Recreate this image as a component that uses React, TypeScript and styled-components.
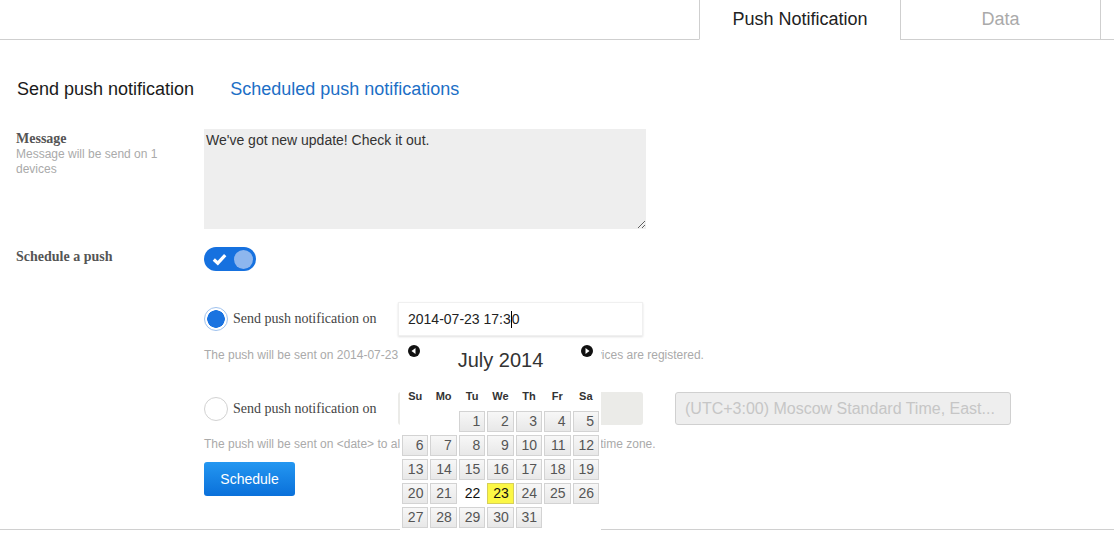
import React from "react";
import styled, { createGlobalStyle } from "styled-components";

const GlobalStyle = createGlobalStyle`
  body {
    margin: 0;
    background: #fff;
    font-family: "Liberation Sans", Arial, sans-serif;
  }
`;

const days: (number | null)[] = [
  null, null, 1, 2, 3, 4, 5,
  6, 7, 8, 9, 10, 11, 12,
  13, 14, 15, 16, 17, 18, 19,
  20, 21, 22, 23, 24, 25, 26,
  27, 28, 29, 30, 31,
];

const weekDays = ["Su", "Mo", "Tu", "We", "Th", "Fr", "Sa"];

const App: React.FC = () => {
  return (
    <Page>
      <GlobalStyle />

      {/* Top tabs */}
      <TabStrip>
        <TabFiller />
        <Tab active>Push Notification</Tab>
        <Tab>Data</Tab>
        <TabFiller small />
      </TabStrip>

      {/* Sub navigation */}
      <SubNav>
        <SubLink>Send push notification</SubLink>
        <SubLink active>Scheduled push notifications</SubLink>
      </SubNav>

      <FormRow>
        <LabelCol>
          <Label>Message</Label>
          <LabelHint>Message will be send on 1 devices</LabelHint>
        </LabelCol>
        <MessageBox readOnly defaultValue="We've got new update! Check it out." />
      </FormRow>

      <FormRow top={18}>
        <LabelCol>
          <Label>Schedule a push</Label>
        </LabelCol>
        <Toggle>
          <svg width="15" height="13" viewBox="0 0 15 13">
            <polyline
              points="1.8,6.5 5.8,10.2 13.2,2.2"
              fill="none"
              stroke="#fff"
              strokeWidth="3.2"
            />
          </svg>
          <Knob />
        </Toggle>
      </FormRow>

      <FormRow top={31}>
        <div />
        <OptionBlock>
          <OptionLine>
            <RadioWrap>
              <Radio checked />
              <RadioLabel>Send push notification on</RadioLabel>
            </RadioWrap>
            <DateField>
              <DateBox>
                2014-07-23 17:3<Caret />0
              </DateBox>
              <Calendar>
                <CalHeader>
                  <ArrowBtn>
                    <svg width="12" height="12" viewBox="0 0 12 12">
                      <circle cx="6" cy="6" r="6" fill="#111" />
                      <polygon points="7.5,3 3.5,6 7.5,9" fill="#fff" />
                    </svg>
                  </ArrowBtn>
                  <CalTitle>July 2014</CalTitle>
                  <ArrowBtn>
                    <svg width="12" height="12" viewBox="0 0 12 12">
                      <circle cx="6" cy="6" r="6" fill="#111" />
                      <polygon points="4.5,3 8.5,6 4.5,9" fill="#fff" />
                    </svg>
                  </ArrowBtn>
                </CalHeader>
                <CalGrid>
                  {weekDays.map((d) => (
                    <WeekDay key={d}>{d}</WeekDay>
                  ))}
                </CalGrid>
                <CalGrid days>
                  {days.map((d, i) =>
                    d === null ? (
                      <span key={i} />
                    ) : (
                      <DayCell
                        key={i}
                        variant={d === 23 ? "selected" : d === 22 ? "today" : "normal"}
                      >
                        {d}
                      </DayCell>
                    )
                  )}
                </CalGrid>
              </Calendar>
            </DateField>
          </OptionLine>
          <Hint top={12}>
            The push will be sent on 2014-07-23 17:30 to all your users' devices, 1 devices are registered.
          </Hint>

          <OptionLine top={29}>
            <RadioWrap>
              <Radio />
              <RadioLabel>Send push notification on</RadioLabel>
            </RadioWrap>
            <DisabledBox />
            <ZoneSelect>(UTC+3:00) Moscow Standard Time, East...</ZoneSelect>
          </OptionLine>
          <Hint top={12}>
            The push will be sent on &lt;date&gt; to all devices situated within the specified time zone.
          </Hint>

          <ScheduleButton>Schedule</ScheduleButton>
        </OptionBlock>
      </FormRow>
    </Page>
  );
};

/* ================== STYLED COMPONENTS ================== */

const Page = styled.div`
  width: 1114px;
  padding-bottom: 33px;
  border-bottom: 1px solid #d0d0d0;
`;

const TabStrip = styled.div`
  display: flex;
  height: 40px;
`;

const TabFiller = styled.div<{ small?: boolean }>`
  flex: ${({ small }) => (small ? "0 0 13px" : "1")};
  border-bottom: 1px solid #cfcfcf;
`;

const Tab = styled.div<{ active?: boolean }>`
  width: 201px;
  display: flex;
  align-items: center;
  justify-content: center;
  padding-bottom: 1px;
  box-sizing: border-box;
  font-size: 18px;
  color: ${({ active }) => (active ? "#222" : "#aaa")};
  border-left: 1px solid #cfcfcf;
  border-right: ${({ active }) => (active ? "none" : "1px solid #cfcfcf")};
  border-bottom: ${({ active }) => (active ? "1px solid transparent" : "1px solid #cfcfcf")};
`;

const SubNav = styled.div`
  display: flex;
  gap: 36px;
  padding: 38px 0 0 17px;
  line-height: 22px;
`;

const SubLink = styled.div<{ active?: boolean }>`
  font-size: 18px;
  color: ${({ active }) => (active ? "#1d6fc6" : "#1a1a1a")};
`;

const FormRow = styled.div<{ top?: number }>`
  display: grid;
  grid-template-columns: 188px 1fr;
  padding-left: 16px;
  margin-top: ${({ top }) => top ?? 29}px;
`;

const LabelCol = styled.div`
  padding-top: 1px;
  width: 160px;
`;

const Label = styled.div`
  font-family: "Liberation Serif", "Times New Roman", serif;
  font-weight: bold;
  font-size: 14px;
  line-height: 17px;
  color: #555;
`;

const LabelHint = styled.div`
  font-size: 12px;
  line-height: 15px;
  color: #aaa;
`;

const MessageBox = styled.textarea`
  display: block;
  width: 442px;
  height: 100px;
  box-sizing: border-box;
  margin: 0;
  padding: 2px;
  border: none;
  outline: none;
  background: #eee;
  font-family: "Liberation Sans", Arial, sans-serif;
  font-size: 14px;
  line-height: 18px;
  color: #333;
  resize: both;
`;

const Toggle = styled.div`
  width: 52px;
  height: 24px;
  border-radius: 12px;
  background: #1671df;
  display: flex;
  align-items: center;
  justify-content: space-between;
  padding: 0 3px 0 8px;
  box-sizing: border-box;
`;

const Knob = styled.span`
  width: 19px;
  height: 19px;
  border-radius: 50%;
  background: #8db6ee;
`;

const OptionBlock = styled.div`
  display: flex;
  flex-direction: column;
  align-items: flex-start;
`;

const OptionLine = styled.div<{ top?: number }>`
  display: flex;
  align-items: center;
  margin-top: ${({ top }) => top ?? 0}px;
`;

const RadioWrap = styled.div`
  width: 194px;
  display: flex;
  align-items: center;
  gap: 5px;
`;

const Radio = styled.span<{ checked?: boolean }>`
  width: 24px;
  height: 24px;
  box-sizing: border-box;
  border-radius: 50%;
  border: 1px solid ${({ checked }) => (checked ? "#9fc2ee" : "#d2d2d2")};
  background: ${({ checked }) =>
    checked ? "radial-gradient(circle, #1a73e0 0 8.5px, #fff 9px)" : "#fff"};
`;

const RadioLabel = styled.span`
  font-family: "Liberation Serif", "Times New Roman", serif;
  font-size: 14px;
  color: #444;
`;

const DateField = styled.div`
  position: relative;
`;

const DateBox = styled.div`
  width: 245px;
  height: 34px;
  box-sizing: border-box;
  padding-left: 9px;
  display: flex;
  align-items: center;
  font-size: 14px;
  color: #222;
  background: #fff;
  border: 1px solid #f0f0f0;
  box-shadow: 0 1px 2px rgba(0, 0, 0, 0.12);
`;

const Caret = styled.span`
  display: inline-block;
  width: 1px;
  height: 17px;
  background: #000;
`;

const Calendar = styled.div`
  position: absolute;
  top: 38px;
  left: 2px;
  z-index: 5;
  width: 201px;
  padding: 0 2px 2px 2px;
  box-sizing: border-box;
  background: #fff;
`;

const CalHeader = styled.div`
  display: grid;
  grid-template-columns: 24px 1fr 24px;
  align-items: start;
  height: 48px;
  padding-top: 5px;
  box-sizing: border-box;
`;

const ArrowBtn = styled.span`
  display: flex;
  justify-content: center;
  svg {
    display: block;
  }
`;

const CalTitle = styled.div`
  text-align: center;
  font-size: 20px;
  line-height: 24px;
  padding-top: 3px;
  color: #333;
`;

const CalGrid = styled.div<{ days?: boolean }>`
  display: grid;
  grid-template-columns: repeat(7, 1fr);
  column-gap: 2px;
  row-gap: 3px;
  margin-bottom: ${({ days }) => (days ? 0 : 7)}px;
`;

const WeekDay = styled.span`
  text-align: center;
  font-size: 11px;
  font-weight: bold;
  line-height: 16px;
  color: #333;
`;

const DayCell = styled.span<{ variant: "normal" | "today" | "selected" }>`
  height: 21px;
  box-sizing: border-box;
  padding-right: 4px;
  text-align: right;
  font-size: 14px;
  line-height: 19px;
  border: 1px solid
    ${({ variant }) =>
      variant === "selected" ? "#d6cf5a" : variant === "today" ? "transparent" : "#d3d3d3"};
  background: ${({ variant }) =>
    variant === "selected"
      ? "#fbf745"
      : variant === "today"
      ? "transparent"
      : "linear-gradient(#f7f7f7, #e8e8e8)"};
  color: ${({ variant }) => (variant === "normal" ? "#555" : "#111")};
`;

const Hint = styled.div<{ top: number }>`
  margin-top: ${({ top }) => top}px;
  font-size: 12px;
  line-height: 15px;
  color: #aaa;
  white-space: nowrap;
`;

const DisabledBox = styled.div`
  width: 245px;
  height: 33px;
  border-radius: 3px;
  background: #ebebe8;
`;

const ZoneSelect = styled.div`
  margin-left: 32px;
  width: 336px;
  height: 33px;
  box-sizing: border-box;
  padding-left: 9px;
  display: flex;
  align-items: center;
  font-size: 16px;
  color: #c6c6c6;
  background: #eee;
  border: 1px solid #d0d0d0;
  border-radius: 3px;
`;

const ScheduleButton = styled.button`
  margin-top: 10px;
  width: 91px;
  height: 34px;
  border: none;
  border-radius: 3px;
  background: linear-gradient(#2497f1, #0a70da);
  color: #fff;
  font-family: "Liberation Sans", Arial, sans-serif;
  font-size: 14px;
  cursor: pointer;
`;

export default App;
